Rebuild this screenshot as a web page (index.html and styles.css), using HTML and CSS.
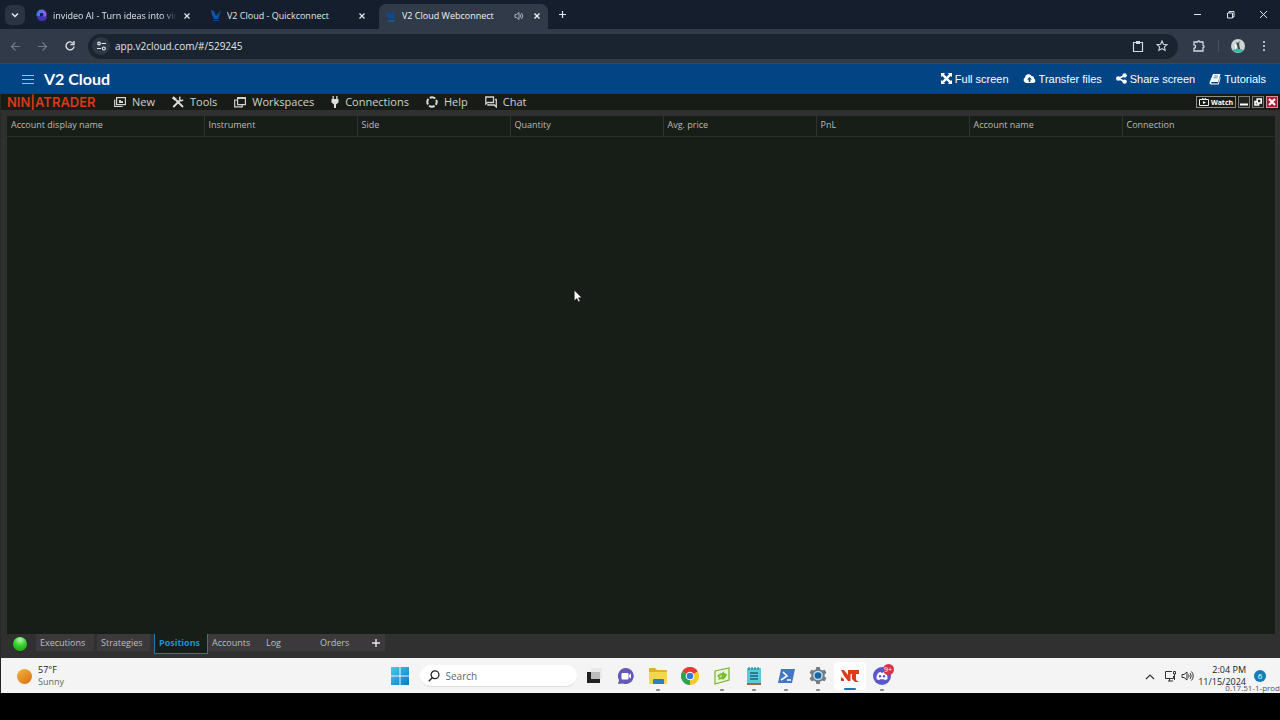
FILE: index.html
```html
<!DOCTYPE html>
<html lang="en">
<head>
<meta charset="utf-8">
<title>V2 Cloud Webconnect</title>
<link rel="stylesheet" href="styles.css">
</head>
<body>
<header class="browser">
  <div class="tabstrip">
    <button class="tab-search" aria-label="Search tabs"><svg width="8" height="8" viewBox="0 0 8 8"><path d="M1 2.5l3 3 3-3" fill="none" stroke="#e8ebf0" stroke-width="1.5"/></svg></button>
    <div class="tab">
      <svg width="13" height="13" viewBox="0 0 13 13"><defs><linearGradient id="iv" x1="0" x2="1"><stop stop-color="#2b7fe8"/><stop offset="1" stop-color="#a259f0"/></linearGradient></defs><circle cx="6.5" cy="5.5" r="5" fill="url(#iv)"/><path d="M2 7c0 4 3 5 5 5s5-1 5-4l-5-1z" fill="#4534b4"/><path d="M5 4.500c2-1 4 0 3.500 1.500S6 7.500 5 7z" fill="#152050"/></svg>
      <span class="tab-title fade">invideo AI - Turn ideas into video</span>
      <button class="close" aria-label="Close tab"><svg width="8" height="8" viewBox="0 0 8 8"><path d="M1.500 1.500l5 5m0-5l-5 5" stroke="#e3e7ed" stroke-width="1.200"/></svg></button>
    </div>
    <div class="tab">
      <svg width="12" height="13" viewBox="0 0 12 13"><path d="M1 1l3 1 2 5 2-2 3-4-2 6-1 3H4L2 6z" fill="#0e56a8"/><path d="M3 11h6v1H3z" fill="#084486"/></svg>
      <span class="tab-title">V2 Cloud - Quickconnect</span>
      <button class="close" aria-label="Close tab"><svg width="8" height="8" viewBox="0 0 8 8"><path d="M1.500 1.500l5 5m0-5l-5 5" stroke="#e3e7ed" stroke-width="1.200"/></svg></button>
    </div>
    <div class="tab active">
      <svg width="12" height="13" viewBox="0 0 12 13"><path d="M1 1q1 3 4 4l4-2v6q-2 2-4 1Q1 8 1 1z" fill="#0b4a94"/><path d="M3 11.500h7v1H3z" fill="#126cc4"/></svg>
      <span class="tab-title">V2 Cloud Webconnect</span>
      <svg class="sound" width="10" height="10" viewBox="0 0 10 10" fill="none" stroke="#aab3c0"><path d="M1 3.500h1.500L5 1.500v7L2.500 6.500H1zM6.300 3.500q1 1.500 0 3M7.600 2q2.200 3 0 6"/></svg>
      <button class="close" aria-label="Close tab"><svg width="8" height="8" viewBox="0 0 8 8"><path d="M1.500 1.500l5 5m0-5l-5 5" stroke="#f4f6f9" stroke-width="1.300"/></svg></button>
    </div>
    <button class="new-tab" aria-label="New tab"><svg width="9" height="9" viewBox="0 0 9 9"><path d="M4.500 1v7M1 4.500h7" stroke="#e3e7ed" stroke-width="1.200"/></svg></button>
    <div class="window-buttons">
      <button aria-label="Minimize"><svg width="9" height="9" viewBox="0 0 9 9"><path d="M1 4.500h7" stroke="#dfe3ea"/></svg></button>
      <button aria-label="Restore"><svg width="9" height="9" viewBox="0 0 9 9" fill="none" stroke="#dfe3ea"><path d="M1.500 3h5v5h-5zM3 3V1.500h5V7H6.500"/></svg></button>
      <button aria-label="Close"><svg width="9" height="9" viewBox="0 0 9 9"><path d="M1 1l7 7m0-7L1 8" stroke="#dfe3ea"/></svg></button>
    </div>
  </div>
  <div class="toolbar">
    <button class="nav" aria-label="Back"><svg width="11" height="11" viewBox="0 0 11 11" fill="none" stroke="#707a88" stroke-width="1.200"><path d="M10 5.500H1.500M5.500 1.500l-4 4 4 4"/></svg></button>
    <button class="nav" aria-label="Forward"><svg width="11" height="11" viewBox="0 0 11 11" fill="none" stroke="#707a88" stroke-width="1.200"><path d="M1 5.500h8.500M5.500 1.500l4 4-4 4"/></svg></button>
    <button class="nav" aria-label="Reload"><svg width="12" height="12" viewBox="0 0 12 12" fill="none" stroke="#dce0e7" stroke-width="1.400"><path d="M10 6.500A4 4 0 1 1 9 3.200"/><path d="M10 1v3.500H6.500"/></svg></button>
    <div class="omnibox">
      <button class="site" aria-label="Site information"><svg width="11" height="10" viewBox="0 0 11 10" fill="none" stroke="#e2e6ec" stroke-width="1.200"><circle cx="3" cy="2.500" r="1.300"/><path d="M5.500 2.500H10M1 7.500h4"/><circle cx="7.800" cy="7.500" r="1.500"/></svg></button>
      <input class="url" aria-label="Address" value="app.v2cloud.com/#/529245">
      <button aria-label="Clipboard"><svg width="12" height="13" viewBox="0 0 12 13" fill="none" stroke="#d3d8e0" stroke-width="1.200"><path d="M1.500 2.500h9v9h-9z"/><path d="M4 1h4v3H4z" fill="#d3d8e0" stroke="none"/></svg></button>
      <button aria-label="Bookmark"><svg width="12" height="12" viewBox="0 0 12 12" fill="none" stroke="#d3d8e0" stroke-width="1.100"><path d="M6 1l1.400 3.200 3.600.4-2.600 2.300.7 3.500L6 8.600l-3.100 1.800.7-3.500L1 4.600l3.600-.4z"/></svg></button>
    </div>
    <button class="ext" aria-label="Extensions"><svg width="14" height="14" viewBox="0 0 14 14" fill="none" stroke="#d3d8e0" stroke-width="1.300"><path d="M2 3h3.500q0-1 1.200-1t1.200 1H11v3.300q1 0 1 1.200t-1 1.200V12H2V9.200q1.500 0 1.500-1.700T2 5.800z"/></svg></button>
    <span class="divider"></span>
    <button aria-label="Profile"><svg width="14" height="14" viewBox="0 0 14 14"><circle cx="7" cy="7" r="7" fill="#cdd6d6"/><path d="M1.500 11q5.500-3 11 0a7 7 0 0 1-11 0" fill="#36b7a5"/><path d="M5 3l2 1 2-2-1 3 1 5H7L6 6z" fill="#3e4549"/><path d="M4 5l2 2-2 4z" fill="#fff"/></svg></button>
    <button class="more" aria-label="Menu"><svg width="4" height="12" viewBox="0 0 4 12" fill="#dce0e7"><circle cx="2" cy="2" r="1"/><circle cx="2" cy="6" r="1"/><circle cx="2" cy="10" r="1"/></svg></button>
  </div>
</header>

<nav class="cloudbar">
  <button class="burger" aria-label="Menu"><svg width="12" height="10" viewBox="0 0 12 10"><path d="M0 1.500h12M0 5.500h12M0 9.500h12" stroke="#9fc0df"/></svg></button>
  <a class="brand" href="#">V2 Cloud</a>
  <div class="cloud-links">
    <a href="#"><svg width="11" height="11" viewBox="0 0 11 11" fill="#fff"><path d="M0 0h4L3 1.300l2.500 2.500L8 1.300 7 0h4v4L9.700 3 7.200 5.500 9.700 8 11 7v4H7l1-1.300-2.500-2.500L3 9.700 4 11H0V7l1.300 1 2.500-2.500L1.300 3 0 4z"/></svg>Full screen</a>
    <a href="#"><svg width="13" height="11" viewBox="0 0 13 11"><path d="M3 10a3 3 0 0 1-1-5.500A3.600 3.600 0 0 1 8.700 3 2.200 2.200 0 0 1 11 5.600 2.300 2.300 0 0 1 10.500 10z" fill="#fff"/><path d="M6.500 4L9 6.500H7.300V9H5.700V6.500H4z" fill="#034485"/></svg>Transfer files</a>
    <a href="#"><svg width="11" height="11" viewBox="0 0 11 11" fill="#fff"><path d="M2.500 5.500l6-3m-6 3l6 3" stroke="#fff" stroke-width="1.400"/><circle cx="2.300" cy="5.500" r="2.200"/><circle cx="8.600" cy="2.400" r="2.200"/><circle cx="8.600" cy="8.600" r="2.200"/></svg>Share screen</a>
    <a href="#"><svg width="12" height="12" viewBox="0 0 12 12"><path d="M4 1h7.500L9 9H2.500q-1 1 .3 1.500H9L11 4l.7.5L9.700 11.500H2Q0 11 .5 9.500z" fill="#fff"/><path d="M5 3h4M4.500 4.800h4" stroke="#34699f" stroke-width=".8"/></svg>Tutorials</a>
  </div>
</nav>

<main class="desktop">
  <nav class="ninja-menu">
    <span class="ninja-logo">NIN|ATRADER</span>
    <button><svg width="12" height="12" viewBox="0 0 12 12" fill="none" stroke="#d2d3d0" stroke-width="1.200"><path d="M2.600 1.600h8.800v7H2.600zM.7 3.500v7h8"/><path d="M5 4h2v1h2v2H5z" fill="#d2d3d0" stroke="none"/></svg>New</button>
    <button><svg width="12" height="12" viewBox="0 0 12 12" fill="none" stroke="#dedfdc"><path d="M1.300 11l6.500-6.500M4 4l7 7" stroke-width="1.800"/><path d="M.8 1.200L4 4" stroke-width="2.600"/><path d="M8.200.8Q6.800 2.500 8 4t3.200-.2" stroke-width="1.500"/></svg>Tools</button>
    <button><svg width="12" height="12" viewBox="0 0 12 12" fill="none" stroke="#d2d3d0" stroke-width="1.200"><path d="M3.600 1.600h7.800v7H3.600zM3.600 4H.700v6.900h7.500V9M3.600 2.500h8"/></svg>Workspaces</button>
    <button><svg width="8" height="12" viewBox="2 0 8 12"><path d="M3.500 0h1.300v3h2.400V0h1.300v3h1v3.500L7 8.500V12H5V8.500L2.500 6.500V3h1z" fill="#dedfdc"/></svg>Connections</button>
    <button><svg width="12" height="12" viewBox="0 0 12 12" fill="none" stroke="#dedfdc" stroke-width="2"><circle cx="6" cy="6" r="4.700" stroke-dasharray="5.800 1.580" stroke-dashoffset="2.900"/></svg>Help</button>
    <button><svg width="12" height="12" viewBox="0 0 12 12" fill="none" stroke="#d2d3d0" stroke-width="1.300"><path d="M.8 1h7.700v5.500H2.500L.8 8zM10 3.500h1.300V11L9.500 9H3V8"/></svg>Chat</button>
    <div class="ninja-controls">
      <button class="watch"><svg width="10" height="8" viewBox="0 0 10 8"><path d="M.5 1.500h9v6h-9zM3 0l2 1.500L7 0" fill="none" stroke="#eee"/><path d="M4 3l3 1.500L4 6z" fill="#fff"/></svg>Watch</button>
      <button class="mini" aria-label="Minimize"><svg width="8" height="8" viewBox="0 0 8 8"><path d="M0 6.500h8" stroke="#fff" stroke-width="2"/></svg></button>
      <button class="mini" aria-label="Restore"><svg width="8" height="8" viewBox="0 0 8 8" fill="none" stroke="#fff" stroke-width="1.600"><path d="M3.200 1h4v4h-4zM3 3.500H1V7h3.500V5"/></svg></button>
      <button class="mini shut" aria-label="Close"><svg width="8" height="8" viewBox="0 0 8 8"><path d="M1 1l6 6m0-6L1 7" stroke="#fff" stroke-width="2"/></svg></button>
    </div>
  </nav>

  <section class="grid-pane">
    <table>
      <thead><tr><th class="wide">Account display name</th><th>Instrument</th><th>Side</th><th>Quantity</th><th>Avg. price</th><th>PnL</th><th>Account name</th><th>Connection</th></tr></thead>
      <tbody></tbody>
    </table>
  </section>

  <div class="pane-tabs">
    <span class="status"></span>
    <button class="exec">Executions</button>
    <button class="strat">Strategies</button>
    <button class="current">Positions</button>
    <button>Accounts</button>
    <button>Log</button>
    <button>Orders</button>
    <button class="add" aria-label="Add tab"><svg width="8" height="8" viewBox="0 0 8 8"><path d="M4 0v8M0 4h8" stroke="#e6e6e6" stroke-width="1.400"/></svg></button>
  </div>
  <svg class="pointer" width="10" height="14" viewBox="0 0 9 13"><path d="M1 1v10l2.400-2.200L5 12l1.500-.7L5 8.200h3z" fill="#fff" stroke="#080a08" stroke-width=".5"/></svg>
</main>

<footer class="taskbar">
  <button class="weather">
    <span class="sun"></span>
    <span class="weather-text"><span class="temp">57°F</span><span>Sunny</span></span>
  </button>
  <div class="apps">
    <button class="app" aria-label="Start"><svg width="18" height="18" viewBox="0 0 18 18"><defs><linearGradient id="win" x2="1" y2="1"><stop stop-color="#48c9ee"/><stop offset="1" stop-color="#0879c6"/></linearGradient></defs><path d="M0 0h8.500v8.500H0zM9.500 0H18v8.500H9.500zM0 9.500h8.500V18H0zM9.500 9.500H18V18H9.500z" fill="url(#win)"/></svg></button>
    <label class="search"><svg width="12" height="12" viewBox="0 0 12 12" fill="none" stroke="#222" stroke-width="1.300"><circle cx="7" cy="4.800" r="3.900"/><path d="M4.200 7.700L.8 11.200"/></svg><input type="text" placeholder="Search" aria-label="Search"></label>
    <button class="app" aria-label="Task view"><svg width="18" height="18" viewBox="0 0 18 18"><path d="M6 1h11v11H6z" fill="#e9e9e9"/><path d="M2 5h4v7h9v4H2z" fill="#222"/><path d="M6 5h9v7H6z" fill="#bdbdbd"/></svg></button>
    <button class="app" aria-label="Video chat"><svg width="18" height="18" viewBox="0 0 18 18"><path d="M9 1a8 8 0 1 1-3 15.500L1 17l1-4A8 8 0 0 1 9 1z" fill="#6259b6"/><rect x="4.500" y="6" width="7" height="6.500" rx="1" fill="#fff"/><path d="M12 8l2-1.500v5L12 10z" fill="#fff"/></svg></button>
    <button class="app open" aria-label="File Explorer"><svg width="18" height="18" viewBox="0 0 18 18"><path d="M0 2q0-1 1-1h5l2 2h9q1 0 1 1v12H0z" fill="#e4ad27"/><path d="M0 5h18v11q0 1-1 1H1q-1 0-1-1z" fill="#fbd452"/><path d="M4 17v-4q0-1 1-1h9q1 0 1 1v4z" fill="#2782c3"/></svg></button>
    <button class="app" aria-label="Chrome"><svg width="18" height="18" viewBox="0 0 18 18"><path d="M9 9L1.200 4.500a9 9 0 0 1 15.600 0z" fill="#e43c31"/><path d="M9 9l7.800-4.500A9 9 0 0 1 9 18z" fill="#f9c928"/><path d="M9 9v9A9 9 0 0 1 1.200 4.500z" fill="#2ba451"/><circle cx="9" cy="9" r="4.300" fill="#fff"/><circle cx="9" cy="9" r="3.300" fill="#3977df"/></svg></button>
    <button class="app open" aria-label="Remote app"><svg width="18" height="18" viewBox="0 0 18 18"><path d="M2 4l14-3v12L2 17z" fill="#eef7e1" stroke="#78b52c" stroke-width="1.200"/><path d="M4 9l2-2 3-1 2-2v2l3 1-1 3-3 3-1-1-4 1 1-2z" fill="#79bd30"/><path d="M6 9l3-1-1 3z" fill="#c9e9a5"/></svg></button>
    <button class="app open" aria-label="Notepad"><svg width="18" height="18" viewBox="0 0 18 18"><path d="M2 1h14v15H2z" fill="#5ac9da"/><path d="M4 0v3m3-3v3m3-3v3m3-3v3" stroke="#286f7c"/><path d="M5 6h8M5 9h8M5 12h8" stroke="#176678" stroke-width="1.300"/><path d="M2 16h14v2H2z" fill="#9a674b"/></svg></button>
    <button class="app open" aria-label="PowerShell"><svg width="18" height="18" viewBox="0 0 18 18"><path d="M4 2h14l-3 14H1z" fill="#4177c3"/><path d="M6 5l4 4-6 4M10 13h4" fill="none" stroke="#fff" stroke-width="1.600"/></svg></button>
    <button class="app open" aria-label="Settings"><svg width="18" height="18" viewBox="0 0 18 18"><path d="M7.300 0h3.400l.6 2.500 2 1 2.400-.8 1.700 3-1.800 1.800v2l1.800 1.800-1.700 3-2.400-.8-2 1-.6 2.500H7.300L6.700 14.500l-2-1-2.400.8-1.700-3 1.800-1.800v-2L.6 5.700l1.700-3 2.400.8 2-1z" fill="#747b82"/><circle cx="9" cy="8.500" r="4.800" fill="#b9dcef"/><circle cx="9" cy="8.500" r="3.300" fill="#1765a7"/></svg></button>
    <button class="app open selected" aria-label="NinjaTrader"><svg width="18" height="18" viewBox="0 0 18 18" fill="#dc3c1a"><path d="M0 3h3l4 5V3h11v4h-3v6l3 2h-4l-3-3V7H9.500v7H7L3 9z"/><path d="M0 10l3 2v2H0z"/></svg></button>
    <button class="app open" aria-label="Discord"><svg width="18" height="18" viewBox="0 0 18 18"><circle cx="9" cy="9" r="9" fill="#5857ce"/><path d="M5 6q1.500-1 3-1l.5 1h1l.5-1q1.500 0 3 1 2 3 1.500 6L12 13.300l-1-1H7l-1 1L3.500 12Q3 9 5 6z" fill="#fff"/><circle cx="7" cy="9.300" r="1.200" fill="#5857ce"/><circle cx="11" cy="9.300" r="1.200" fill="#5857ce"/></svg><span class="badge">9+</span></button>
  </div>
  <div class="tray">
    <button aria-label="Show hidden icons"><svg width="10" height="7" viewBox="0 0 10 7"><path d="M1 6l4-4 4 4" fill="none" stroke="#333" stroke-width="1.200"/></svg></button>
    <button aria-label="Network"><svg width="13" height="12" viewBox="0 0 13 12" fill="none" stroke="#333"><path d="M8 1.500H1.500v7h8V6M4 11h5M5.500 8.500V11M9.500 1.500h2V4h-2zM10.500 4v6"/></svg></button>
    <button aria-label="Volume"><svg width="13" height="12" viewBox="0 0 13 12" fill="none" stroke="#333"><path d="M1 4.500h2L6 2v8L3 7.500H1zM7.500 4.500q1.200 1.500 0 3M9 3q2.500 3 0 6M10.500 1.500q3.500 4.500 0 9"/></svg></button>
    <div class="clock"><span>2:04 PM</span><span>11/15/2024</span></div>
    <span class="count">6</span>
  </div>
  <span class="version">0.17.51-1-prod</span>
</footer>
</body>
</html>
```
FILE: styles.css
```css
* { box-sizing: border-box; }
body {
  margin: 0;
  min-height: 100vh;
  padding-bottom: 27px;
  display: flex;
  flex-direction: column;
  background: #000;
  font-family: "Open Sans", "Noto Sans", sans-serif;
  font-size: 9px;
}
button, input { font: inherit; color: inherit; border: 0; background: none; padding: 0; margin: 0; }
button { display: flex; align-items: center; justify-content: center; }
svg { flex: none; display: block; }
a { color: inherit; text-decoration: none; }

/* Browser frame */
.browser { color: #e0e4eb; }
.tabstrip { display: flex; align-items: center; height: 29px; padding-left: 5px; background: #151e2c; }
.tab-search { width: 20px; height: 20px; border-radius: 6px; background: #2b3442; }
.tab { display: flex; align-items: center; width: 175px; height: 25px; margin-top: 4px; padding: 0 8px 2px 10px; gap: 5px; }
.tab-title { flex: 1; overflow: hidden; white-space: nowrap; line-height: 14px; }
.fade { mask-image: linear-gradient(to right, #000 88%, transparent); }
.close { width: 10px; height: 14px; }
.tab.active { width: 169px; margin-left: 4px; padding: 0 6px 2px 6px; border-radius: 7px 7px 0 0; background: #303a49; color: #f1f3f6; }
.sound { margin-right: 3px; }
.new-tab { width: 29px; height: 28px; }
.window-buttons { display: flex; margin-left: auto; }
.window-buttons button { width: 33px; height: 28px; }
.toolbar { display: flex; align-items: center; height: 35px; padding: 0 9px 0 2px; background: #303a49; border-bottom: 1px solid #3d444c; }
.nav { width: 27px; height: 26px; }
.omnibox { flex: 1; display: flex; align-items: center; height: 25px; margin-left: 5px; padding: 0 10px 0 4px; gap: 12px; border-radius: 13px; background: #1a2431; }
.site { width: 18px; height: 18px; border-radius: 9px; background: #2c3644; }
.url { flex: 1; min-width: 0; margin-left: -7px; font-size: 10px; line-height: 16px; outline: 0; }
.ext { margin-left: 14px; }
.divider { width: 1px; height: 12px; margin: 0 12px; background: #46505e; }
.more { width: 14px; margin-left: 12px; }

/* V2 Cloud bar */
.cloudbar { display: flex; align-items: center; height: 30px; padding: 0 14px 1px 21px; background: #034485; color: #fff; }
.burger { width: 13px; height: 16px; }
.brand { margin-left: 10px; font-family: Lato, sans-serif; font-size: 16px; font-weight: 700; line-height: 20px; }
.cloud-links { display: flex; gap: 14px; margin-left: auto; font-family: "Liberation Sans", Arial, sans-serif; font-size: 11px; line-height: 14px; }
.cloud-links a { display: flex; align-items: center; gap: 3px; }

/* Trading workspace */
.desktop { position: relative; flex: 1; display: flex; flex-direction: column; background: #303031; border-left: 1px solid #262b26; }
.ninja-menu { display: flex; align-items: center; height: 16px; gap: 17px; padding: 0 2px 0 6px; background: #171d16; color: #d0d2ce; font-size: 11px; line-height: 14px; }
.ninja-menu > button { gap: 6px; }
.ninja-logo { min-width: 90px; font-family: Inter, sans-serif; font-size: 13px; font-weight: 600; color: #d83a18; }
.ninja-controls { display: flex; gap: 2px; margin-left: auto; }
.watch { width: 40px; height: 12px; gap: 2px; border: 1px solid #8b8f8b; color: #fff; font-size: 7px; font-weight: 700; line-height: 9px; }
.mini { width: 12px; height: 12px; border: 1px solid #777b77; background: #202420; }
.shut { background: #b01b3b; border-color: #d58b99; }
.grid-pane { flex: 1; margin: 6px 5px 0 6px; background: #171d17; }
table { width: 100%; table-layout: fixed; border-collapse: collapse; }
th { height: 20px; padding: 0 4px 1px; border-right: 1px solid #2d332d; border-bottom: 1px solid #272d27; color: #b9bcb8; font-weight: 400; text-align: left; line-height: 14px; }
th:last-child { border-right: 0; }
.wide { width: 197px; }
.pane-tabs { display: flex; height: 24px; padding-left: 12px; color: #bfbfc0; }
.status { width: 14px; height: 14px; margin: 3px 9px 0 0; border-radius: 50%; background: radial-gradient(circle at 50% 20%, #b4f5a7, #2dcc25 50%, #18a513); }
.pane-tabs button { width: 54px; height: 17px; padding: 0 0 0 4px; justify-content: flex-start; background: #3b393c; }
.pane-tabs .exec { width: 58px; margin-right: 3px; }
.pane-tabs .strat { width: 53px; margin-right: 4px; }
.pane-tabs .current { height: 20px; padding-bottom: 2px; border: 1px solid #1c7cad; border-top: 0; background: #171d17; color: #1b8fd8; font-weight: 700; }
.pane-tabs .add { width: 15px; padding-left: 2px; }
.pointer { position: absolute; left: 572px; top: 195px; }

/* Windows taskbar */
.taskbar { position: relative; display: grid; grid-template-columns: 1fr auto 1fr; align-items: center; height: 35px; padding-top: 1px; background: #f4f4f4; border-left: 1px solid #222; color: #222; }
.weather { justify-self: start; margin-left: 16px; gap: 6px; }
.sun { width: 15px; height: 15px; border-radius: 50%; background: linear-gradient(145deg, #efb83c, #e06a13); }
.weather-text { display: flex; flex-direction: column; text-align: left; line-height: 12px; color: #666; }
.temp { color: #222; }
.apps { display: flex; align-items: center; }
.app { position: relative; width: 32px; height: 32px; }
.app.open::after { content: ""; position: absolute; left: 14px; bottom: 1px; width: 4px; height: 2px; border-radius: 1px; background: #858585; }
.app.selected { height: 28px; border-radius: 4px; background: #fff; }
.app.selected::after { left: 10px; bottom: 0; width: 12px; background: #1975b5; }
.search { display: flex; align-items: center; width: 157px; height: 22px; margin: 0 1px 0 4px; padding: 0 8px; gap: 6px; border-radius: 11px; background: #fff; border-bottom: 1px solid #ddd; }
.search input { flex: 1; min-width: 0; font-size: 10px; line-height: 14px; outline: 0; }
.search input::placeholder { color: #666; opacity: 1; }
.badge { position: absolute; right: 4px; top: 4px; width: 11px; height: 11px; border-radius: 50%; background: #d63447; color: #fff; font-size: 7px; line-height: 11px; text-align: center; }
.tray { justify-self: end; display: flex; align-items: center; margin-right: 14px; }
.tray button { margin-right: 4px; }
.tray button:first-child { margin-right: 9px; }
.clock { display: flex; flex-direction: column; text-align: right; line-height: 12px; }
.count { width: 12px; height: 12px; margin-left: 8px; border-radius: 50%; background: #137eb8; color: #fff; font-size: 8px; line-height: 12px; text-align: center; }
.version { position: absolute; right: 0; bottom: 1px; font-size: 8px; line-height: 9px; color: #555; }
```
